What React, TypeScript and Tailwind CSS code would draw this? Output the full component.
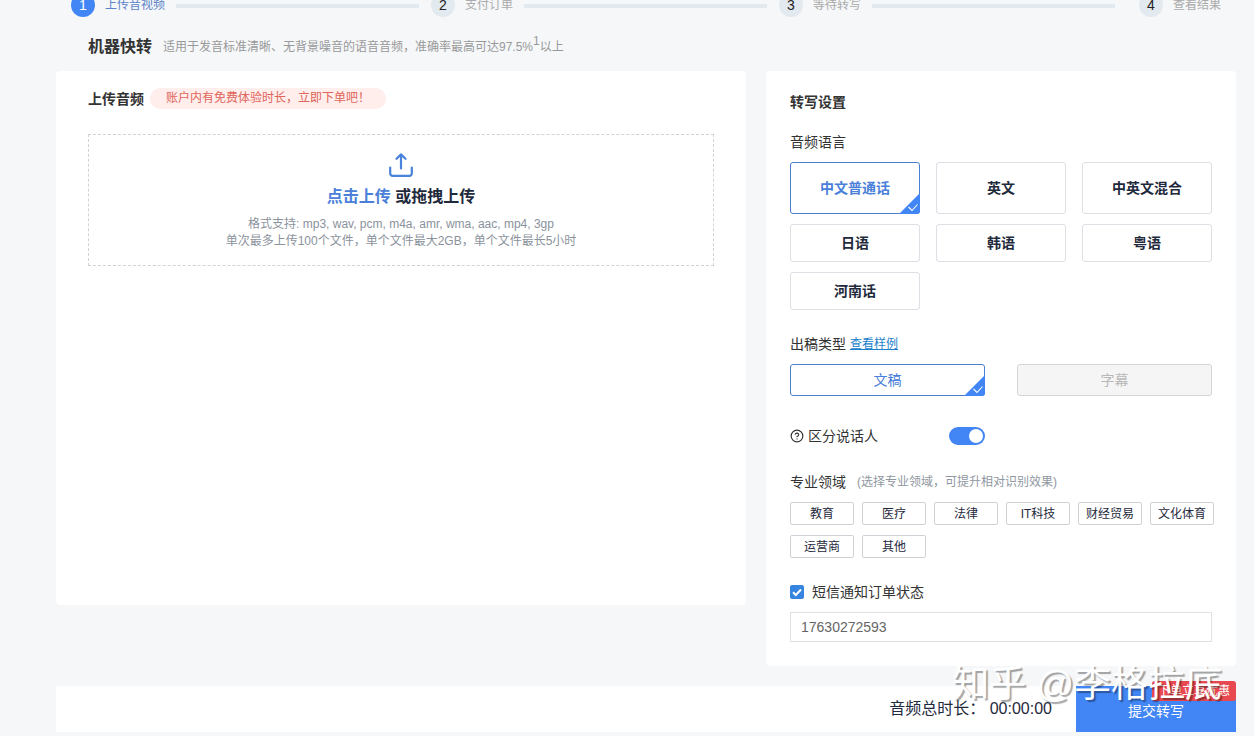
import React, { useState } from 'react';
import { CircleHelp } from 'lucide-react';

const steps = ['上传音视频', '支付订单', '等待转写', '查看结果'];
const languages = ['中文普通话', '英文', '中英文混合', '日语', '韩语', '粤语', '河南话'];
const fields = ['教育', '医疗', '法律', 'IT科技', '财经贸易', '文化体育', '运营商', '其他'];

function CornerCheck() {
  return (
    <svg className="absolute -right-px -bottom-px" width="21" height="21" viewBox="0 0 21 21" fill="none">
      <path d="M21 0V18a3 3 0 0 1-3 3H0Z" fill="#4285f4" />
      <path d="M9.5 14l3.5 3.5L18.5 11.5" stroke="#fff" strokeWidth="1.1" />
    </svg>
  );
}

function UploadIcon() {
  return (
    <svg width="24" height="24" viewBox="0 0 24 24" fill="none" stroke="#4a83dc" strokeWidth="2.2" strokeLinecap="round" strokeLinejoin="round">
      <path d="M12 15.5V1.8M7.5 5.8L12 1.4l4.5 4.4" />
      <path d="M1.2 14.5v6a2.3 2.3 0 0 0 2.3 2.3h17a2.3 2.3 0 0 0 2.3-2.3v-6" />
    </svg>
  );
}

export default function App() {
  const [language, setLanguage] = useState('中文普通话');
  const [picked, setPicked] = useState<string[]>([]);
  const [speakers, setSpeakers] = useState(true);
  const [notify, setNotify] = useState(true);
  const [phone, setPhone] = useState('17630272593');

  const toggleField = (name: string) => {
    setPicked(picked.includes(name) ? picked.filter(f => f !== name) : [...picked, name]);
  };

  return (
    <div className="flex flex-col min-h-screen overflow-hidden bg-[#f5f7f9] pb-1 text-sm leading-5 text-[#333] font-['Liberation_Sans','Noto_Sans_CJK_SC',sans-serif]">
      {/* Steps */}
      <ol className="-mt-[7px] flex items-center pl-[71px] pr-[33px] text-xs text-[#aaa]">
        {steps.map((step, i) => (
          <li key={step} className="contents">
            <span className={`flex h-6 w-6 shrink-0 items-center justify-center rounded-full text-sm ${i === 0 ? 'bg-[#4285f4] text-white' : 'bg-[#e2e9ef] text-[#222]'}`}>
              {i + 1}
            </span>
            <span className={`ml-2.5 whitespace-nowrap ${i === 0 ? 'text-[#5c83c8]' : ''}`}>{step}</span>
            {i < 3 && <span className={`mt-0.5 ml-[11px] h-1 flex-1 bg-[#e2e9ef] ${i === 2 ? 'mr-6' : 'mr-3'}`} />}
          </li>
        ))}
      </ol>

      <div className="mt-5 ml-14 mr-[18px] flex items-center pl-8">
        <h1 className="text-base leading-5 font-bold">机器快转</h1>
        <p className="ml-[11px] text-xs leading-5 text-[#999]">
          适用于发音标准清晰、无背景噪音的语音音频，准确率最高可达97.5%<sup className="text-xs leading-none">1</sup>以上
        </p>
      </div>

      <main className="mt-3.5 ml-14 mr-[18px] flex items-start gap-5">
        {/* Upload */}
        <section className="min-h-[534px] flex-1 rounded-sm bg-white px-8 pt-[17px]">
          <div className="flex items-center gap-1.5">
            <h2 className="font-bold">上传音频</h2>
            <span className="w-[236px] rounded-full bg-[#ffeeec] px-4 text-xs leading-[21px] text-[#e0655a]">
              账户内有免费体验时长，立即下单吧！
            </span>
          </div>
          <label className="mt-[25px] flex h-[132px] cursor-pointer flex-col items-center border border-dashed border-[#d0d3d6] pt-[18px]">
            <input type="file" multiple className="sr-only" />
            <UploadIcon />
            <span className="mt-2.5 text-base leading-5 font-bold text-[#1f2a3c]">
              <span className="text-[#4a80d9]">点击上传</span> 或拖拽上传
            </span>
            <span className="mt-[9px] text-center text-xs leading-[17px] text-[#8a929c]">
              格式支持: mp3, wav, pcm, m4a, amr, wma, aac, mp4, 3gp
              <br />
              单次最多上传100个文件，单个文件最大2GB，单个文件最长5小时
            </span>
          </label>
        </section>

        {/* Settings */}
        <section className="w-[470px] shrink-0 rounded-sm bg-white px-6 pt-[21px] pb-6">
          <h2 className="font-bold">转写设置</h2>

          <h3 className="mt-5">音频语言</h3>
          <div className="mt-2.5 grid grid-cols-3 gap-x-4 gap-y-2.5">
            {languages.map((name, i) => (
              <button
                key={name}
                onClick={() => setLanguage(name)}
                className={`relative rounded-[3px] border font-bold ${i < 3 ? 'h-[52px]' : 'h-[38px]'} ${language === name ? 'border-[#4a7fcf] text-[#4a80d9]' : 'border-[#dcdfe3] text-[#1f2a3c]'}`}
              >
                {name}
                {language === name && <CornerCheck />}
              </button>
            ))}
          </div>

          <div className="mt-6 flex items-center gap-1">
            <h3>出稿类型</h3>
            <a href="#sample" className="text-xs leading-5 text-[#1b7fc9] underline">查看样例</a>
          </div>
          <div className="mt-2.5 grid grid-cols-2 gap-8">
            <button className="relative h-8 rounded-[3px] border border-[#4a7fcf] text-[#4a80d9]">
              文稿
              <CornerCheck />
            </button>
            <button disabled className="h-8 rounded-[3px] border border-[#d5d5d5] bg-[#f5f5f5] text-[#b8b8b8]">字幕</button>
          </div>

          <div className="mt-[30px] flex w-[195px] items-center">
            <CircleHelp className="mr-1 h-3.5 w-3.5 text-[#333]" />
            <label htmlFor="speakers">区分说话人</label>
            <input
              id="speakers"
              type="checkbox"
              role="switch"
              checked={speakers}
              onChange={e => setSpeakers(e.target.checked)}
              className="ml-auto h-[18px] w-9 appearance-none rounded-full bg-gray-300 p-0.5 before:block before:h-3.5 before:w-3.5 before:rounded-full before:bg-white checked:bg-[#4285f4] checked:before:ml-[18px]"
            />
          </div>

          <div className="mt-[26px] flex items-center gap-[11px]">
            <h3>专业领域</h3>
            <span className="text-xs leading-5 text-[#8f979f]">(选择专业领域，可提升相对识别效果)</span>
          </div>
          <div className="mt-2.5 -mr-0.5 grid grid-cols-6 gap-x-2 gap-y-2.5">
            {fields.map(name => (
              <button
                key={name}
                onClick={() => toggleField(name)}
                className={`h-[23px] rounded-[2px] border text-xs leading-5 ${picked.includes(name) ? 'border-[#4a7fcf] text-[#4a80d9]' : 'border-[#ced2d6] text-[#1f2a3c]'}`}
              >
                {name}
              </button>
            ))}
          </div>

          <div className="mt-6 flex items-center">
            <span className="relative mr-2 flex h-3.5 w-3.5">
              <input
                id="notify"
                type="checkbox"
                checked={notify}
                onChange={e => setNotify(e.target.checked)}
                className="peer h-3.5 w-3.5 appearance-none rounded-[2px] border border-gray-400 checked:border-[#3584e0] checked:bg-[#3584e0]"
              />
              <svg className="pointer-events-none absolute inset-0 hidden peer-checked:block" width="14" height="14" viewBox="0 0 14 14" fill="none">
                <path d="M3 7.2l2.8 2.8L11 4.5" stroke="#fff" strokeWidth="2" />
              </svg>
            </span>
            <label htmlFor="notify">短信通知订单状态</label>
          </div>
          <input
            type="tel"
            aria-label="短信通知订单状态"
            value={phone}
            onChange={e => setPhone(e.target.value)}
            className="mt-2.5 block h-[30px] w-full border border-[#dfe2e5] px-2.5 text-sm text-[#666] outline-none"
          />
        </section>
      </main>

      {/* Submit bar */}
      <footer className="relative mt-5 ml-14 mr-[18px] flex h-[46px] items-center justify-end bg-white">
        <p className="mr-6 text-base leading-5 text-[#1f2a3c]">音频总时长： 00:00:00</p>
        <button className="relative h-full w-40 bg-[#4285f4] pt-1 text-white">
          提交转写
          <span className="absolute -top-[5px] right-0 rounded-[3px] bg-[#e8484f] px-1.5 text-xs leading-5">下单立享优惠</span>
        </button>
        <span className="pointer-events-none absolute right-3.5 -top-6 whitespace-nowrap text-[37px] leading-[46px] text-white [text-shadow:2px_2px_1px_rgba(0,0,0,0.35)]">
          知乎 @李格拉底
        </span>
      </footer>
    </div>
  );
}
